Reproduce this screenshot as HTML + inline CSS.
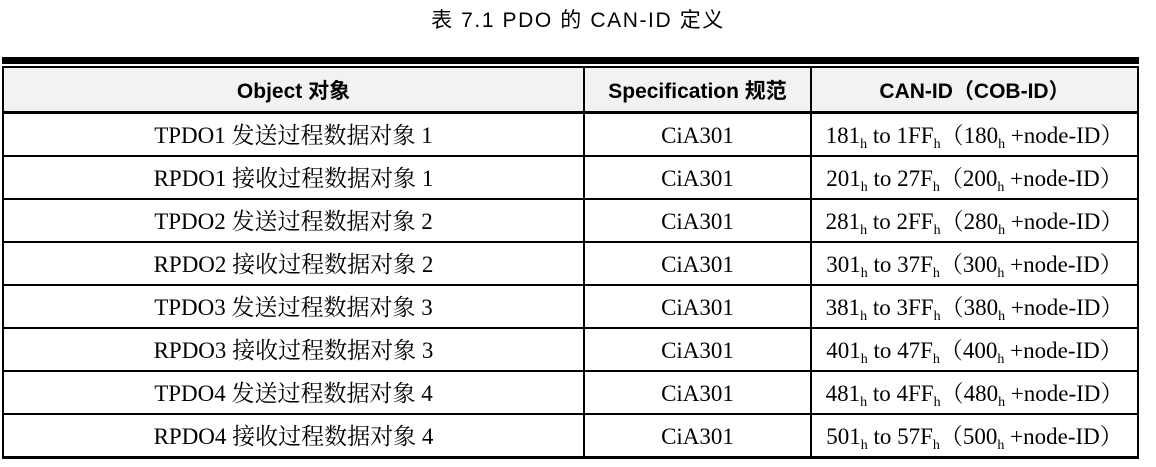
<!DOCTYPE html>
<html><head><meta charset="utf-8"><style>
body{margin:0;width:1156px;height:467px;background:#fff;position:relative;overflow:hidden}
.t{position:absolute;top:4px;left:0;width:1156px;text-align:center;font:21px "Liberation Sans","Noto Sans CJK SC",sans-serif;letter-spacing:1.6px;color:#000}
.hl{position:absolute;background:#000}
.c{position:absolute;text-align:center;font:23px "Liberation Serif","Noto Serif CJK SC",serif;color:#000;line-height:43px;white-space:nowrap}
.h{position:absolute;text-align:center;font:bold 21px "Liberation Sans","Noto Sans CJK SC",sans-serif;line-height:44px;top:70px;white-space:nowrap}
sub{font-size:14px;vertical-align:-5px;line-height:0}
</style></head><body>
<div class="t">表 7.1 PDO 的 CAN-ID 定义</div>
<div class="hl" style="left:2px;top:57px;width:1137px;height:7px"></div>
<div style="position:absolute;left:4px;top:67px;width:1134px;height:45px;background:#f2f2f2"></div>
<div class="hl" style="left:2px;top:66px;width:1137px;height:2px"></div>
<div class="hl" style="left:2px;top:111px;width:1137px;height:3px"></div>
<div class="hl" style="left:2px;top:155px;width:1137px;height:2px"></div>
<div class="hl" style="left:2px;top:198px;width:1137px;height:2px"></div>
<div class="hl" style="left:2px;top:241px;width:1137px;height:2px"></div>
<div class="hl" style="left:2px;top:284px;width:1137px;height:2px"></div>
<div class="hl" style="left:2px;top:327px;width:1137px;height:2px"></div>
<div class="hl" style="left:2px;top:370px;width:1137px;height:2px"></div>
<div class="hl" style="left:2px;top:413px;width:1137px;height:2px"></div>
<div class="hl" style="left:2px;top:456px;width:1137px;height:3px"></div>
<div class="hl" style="left:2px;top:66px;width:2px;height:393px"></div>
<div class="hl" style="left:583px;top:66px;width:2px;height:393px"></div>
<div class="hl" style="left:810px;top:66px;width:2px;height:393px"></div>
<div class="hl" style="left:1137px;top:66px;width:2px;height:393px"></div>
<div class="h" style="left:4px;width:579px">Object 对象</div>
<div class="h" style="left:585px;width:225px">Specification 规范</div>
<div class="h" style="left:812px;width:325px">CAN-ID（COB-ID）</div>
<div style="position:absolute;left:0;top:114px">
<div class="c" style="left:4px;width:579px;top:0">TPDO1 发送过程数据对象 1</div><div class="c" style="left:585px;width:225px;top:0">CiA301</div><div class="c" style="left:812px;width:325px;top:0">181<sub>h</sub> to 1FF<sub>h</sub>（180<sub>h</sub> +node-ID）</div>
<div class="c" style="left:4px;width:579px;top:43px">RPDO1 接收过程数据对象 1</div><div class="c" style="left:585px;width:225px;top:43px">CiA301</div><div class="c" style="left:812px;width:325px;top:43px">201<sub>h</sub> to 27F<sub>h</sub>（200<sub>h</sub> +node-ID）</div>
<div class="c" style="left:4px;width:579px;top:86px">TPDO2 发送过程数据对象 2</div><div class="c" style="left:585px;width:225px;top:86px">CiA301</div><div class="c" style="left:812px;width:325px;top:86px">281<sub>h</sub> to 2FF<sub>h</sub>（280<sub>h</sub> +node-ID）</div>
<div class="c" style="left:4px;width:579px;top:129px">RPDO2 接收过程数据对象 2</div><div class="c" style="left:585px;width:225px;top:129px">CiA301</div><div class="c" style="left:812px;width:325px;top:129px">301<sub>h</sub> to 37F<sub>h</sub>（300<sub>h</sub> +node-ID）</div>
<div class="c" style="left:4px;width:579px;top:172px">TPDO3 发送过程数据对象 3</div><div class="c" style="left:585px;width:225px;top:172px">CiA301</div><div class="c" style="left:812px;width:325px;top:172px">381<sub>h</sub> to 3FF<sub>h</sub>（380<sub>h</sub> +node-ID）</div>
<div class="c" style="left:4px;width:579px;top:215px">RPDO3 接收过程数据对象 3</div><div class="c" style="left:585px;width:225px;top:215px">CiA301</div><div class="c" style="left:812px;width:325px;top:215px">401<sub>h</sub> to 47F<sub>h</sub>（400<sub>h</sub> +node-ID）</div>
<div class="c" style="left:4px;width:579px;top:258px">TPDO4 发送过程数据对象 4</div><div class="c" style="left:585px;width:225px;top:258px">CiA301</div><div class="c" style="left:812px;width:325px;top:258px">481<sub>h</sub> to 4FF<sub>h</sub>（480<sub>h</sub> +node-ID）</div>
<div class="c" style="left:4px;width:579px;top:301px">RPDO4 接收过程数据对象 4</div><div class="c" style="left:585px;width:225px;top:301px">CiA301</div><div class="c" style="left:812px;width:325px;top:301px">501<sub>h</sub> to 57F<sub>h</sub>（500<sub>h</sub> +node-ID）</div>
</div>
</body></html>
